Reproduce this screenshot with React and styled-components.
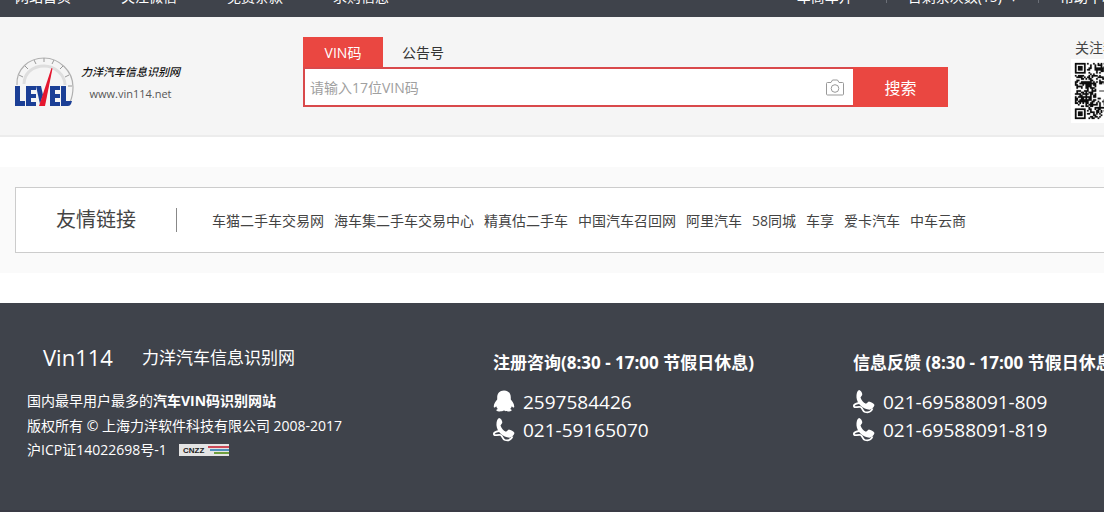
import React, { useState } from 'react';
import styled, { createGlobalStyle } from 'styled-components';

const GlobalStyle = createGlobalStyle`
  * {
    box-sizing: border-box;
  }
  body {
    margin: 0;
    background: #fff;
    color: #444;
    font: 14px/24px "Open Sans", "Noto Sans CJK SC", sans-serif;
    overflow-x: hidden;
  }
  a {
    color: inherit;
    text-decoration: none;
  }
  ul, h2, h3, p {
    margin: 0;
    padding: 0;
    list-style: none;
    font-weight: normal;
  }
`;

const Page = styled.div`
  min-width: 1200px;
`;

const TopBar = styled.nav`
  display: flex;
  justify-content: space-between;
  align-items: center;
  height: 40px;
  margin-top: -23px;
  padding: 0 84px 0 15px;
  background: #3f434b;
  color: #fff;
`;

const TopLinks = styled.div`
  display: flex;
  align-items: center;
  gap: ${({ $gap }) => $gap}px;
`;

const UserLink = styled.a`
  padding-right: 12px;
`;

const DropLink = styled.a`
  display: flex;
  gap: 8px;
`;

const TopDivider = styled.span`
  width: 1px;
  height: 12px;
  background: #6b6f77;
`;

const Header = styled.header`
  display: flex;
  align-items: flex-start;
  height: 120px;
  padding: 20px 15px 0;
  background: #f5f5f5;
  border-bottom: 2px solid #ececec;
`;

const Logo = styled.a`
  display: flex;
  gap: 7px;
  width: 288px;
  padding-top: 20px;
`;

const LogoText = styled.div`
  display: flex;
  flex-direction: column;
  padding-top: 4px;
  font-size: 11px;
  color: #555;
  text-align: center;
  line-height: 22px;

  strong {
    color: #111;
    font-weight: 500;
    font-style: italic;
  }
`;

const Search = styled.form`
  width: 645px;
`;

const Tabs = styled.div`
  display: flex;
  height: 30px;
`;

const Tab = styled.button`
  width: 80px;
  padding: 2px 0 0;
  border: 0;
  font: inherit;
  color: ${({ $active }) => ($active ? '#fff' : '#333')};
  background: ${({ $active }) => ($active ? '#ea4741' : 'transparent')};
`;

const SearchRow = styled.div`
  display: flex;
  height: 40px;
  background: #fff;
  border: 2px solid #d9494b;
  border-right: 0;
`;

const SearchInput = styled.input`
  flex: 1;
  min-width: 0;
  padding: 2px 5px 0;
  border: 0;
  outline: 0;
  background: none;
  font: inherit;

  &::placeholder {
    color: #a0a0a0;
    opacity: 1;
  }
`;

const CameraButton = styled.button`
  display: flex;
  align-items: center;
  padding: 0 9px;
  border: 0;
  background: none;
`;

const SearchButton = styled.button`
  width: 95px;
  margin: -2px 0;
  padding: 2px 0 0;
  border: 0;
  background: #ea4741;
  color: #fff;
  font: inherit;
  font-size: 16px;
`;

const Follow = styled.div`
  display: flex;
  flex-direction: column;
  margin-left: 123px;
  line-height: 22px;

  span {
    padding-left: 4px;
  }
`;

const Band = styled.section`
  margin: 30px 0;
  padding: 20px 15px;
  background: #fafafa;
`;

const LinksCard = styled.div`
  display: flex;
  align-items: center;
  height: 66px;
  padding-left: 40px;
  background: #fff;
  border: 1px solid #ccc;
`;

const LinksTitle = styled.h2`
  padding-right: 40px;
  margin-right: 35px;
  border-right: 1px solid #888;
  font-size: 20px;
  line-height: 24px;
`;

const LinksList = styled.ul`
  display: flex;
  gap: 10px;
  padding-top: 2px;
`;

const Footer = styled.footer`
  display: flex;
  height: 209px;
  padding-left: 27px;
  background: #3f434b;
  border-bottom: 2px solid #3a3b45;
  color: #fff;
`;

const About = styled.div`
  flex: none;
  width: 466px;
  padding-top: 40px;
  line-height: 25px;
`;

const Brand = styled.div`
  display: flex;
  align-items: center;
  gap: 29px;
  height: 28px;
  margin-bottom: 17px;
  padding-left: 16px;
  font-size: 17px;

  span:first-child {
    font-size: 22px;
  }
`;

const Record = styled.p`
  display: flex;
  align-items: center;
  gap: 12px;
  line-height: 24px;
`;

const Contact = styled.div`
  flex: none;
  width: 360px;
  padding-top: 48px;
`;

const ContactTitle = styled.h3`
  margin-bottom: 13px;
  font-size: 17px;
  font-weight: bold;
  white-space: nowrap;
`;

const ContactLine = styled.p`
  display: flex;
  align-items: center;
  gap: 8px;
  font-size: 19px;
  line-height: 28px;
`;

const topLinks = ['网站首页', '关注微信', '免费条款', '求购信息'];

const friendLinks = [
  '车猫二手车交易网', '海车集二手车交易中心', '精真估二手车', '中国汽车召回网',
  '阿里汽车', '58同城', '车享', '爱卡汽车', '中车云商',
];

const contacts = [
  {
    title: '注册咨询(8:30 - 17:00 节假日休息)',
    lines: [{ icon: 'qq', text: '2597584426' }, { icon: 'phone', text: '021-59165070' }],
  },
  {
    title: '信息反馈 (8:30 - 17:00 节假日休息)',
    lines: [{ icon: 'phone', text: '021-69588091-809' }, { icon: 'phone', text: '021-69588091-819' }],
  },
];

const LevelLogo = () => (
  <svg width="59" height="50" viewBox="0 0 59 50" fill="none">
    <path d="M2 28C1 12 14 1 29 1s29 13 29 29c0 6-1 11-3 15" stroke="#b0b0b0" strokeWidth="1.200" />
    <path d="M9 27C9 16 18 9 29 9s21 9 21 19" stroke="#dedede" strokeWidth="3" />
    <path d="M29 1v4M19 3l2 4M10 9l3 3M4 18l4 2M39 3l-2 4M48 9l-3 3M54 18l-4 2M57 29h-4" stroke="#999" />
    <g fill="#1b3f96">
      <path d="M0 29h5v15h5v5H0z" />
      <path d="M11 29h10v4h-5v4h5v4h-5v4h5v4H11z" />
      <path d="M21 29h5l2 9-3 9z" />
      <path d="M35 29h10v4h-5v4h5v4h-5v4h5v4H35z" />
      <path d="M46 29h5v15h6l-1 3q-1 2-3 2h-7z" />
    </g>
    <path d="M36.500 11l1 .5L30 49h-6z" fill="#e5172f" />
  </svg>
);

const Camera = () => (
  <svg width="18" height="17" viewBox="0 0 18 17" fill="none" stroke="#999">
    <path d="M1.500 3.500h3.500l1.500-2.500h5l1.500 2.500h3.500q1 0 1 1v10.500q0 1-1 1h-15q-1 0-1-1v-10.500q0-1 1-1z" />
    <circle cx="9" cy="9.500" r="3.800" />
  </svg>
);

const QQ = () => (
  <svg width="22" height="24" viewBox="0 0 22 24" fill="#fff">
    <path d="M11 .5C6.500.5 4.200 3.500 4.200 7.500v2C2 12 .5 15 .8 17c.3 1.300 1.500.3 2.400-.8.300 1.200.8 2 1.600 2.800C3 19.500 2.500 21.300 6 21.500c2 .1 4-.3 5-.9 1 .6 3 1 5 .9 3.500-.2 3-2 1.200-2.500.8-.8 1.300-1.600 1.600-2.800.9 1.100 2.100 2.100 2.400.8.300-2-1.200-5-3.400-7.500v-2c0-4-2.300-7-6.800-7z" />
  </svg>
);

const Phone = () => (
  <svg width="22" height="24" viewBox="0 0 22 24" fill="none">
    <path d="M6 0c2 .5 3.700 3 3.200 5L7.500 7.500c1 2.800 2.700 5 5.500 6.300l2.800-2.300c2 .2 5 1.700 5.700 3.500-1 3-3 4.300-5 4.700C10 19.500 4 13.500 3.500 7.500 3.300 4 4 1 6 0z" fill="#fff" />
    <path d="M6 13C2 13.500.2 15.300 1.200 16.800c1.200 1.300 3.800-.6 6.300.2 2.500 1.200 1.500 4 4.500 5 3 .8 6 0 7.500-3.500" stroke="#fff" strokeWidth="1.800" />
  </svg>
);

const Cnzz = () => (
  <svg width="50" height="12" viewBox="0 0 50 12">
    <path d="M0 0h50v12H0z" fill="#e4e4e4" />
    <text x="4" y="9" fontFamily="Liberation Sans" fontSize="8" fontWeight="bold" fill="#222">CNZZ</text>
    <path d="M29 2h21v2H29z" fill="#cc4a58" />
    <path d="M31 5h19v2H31z" fill="#4d8ebb" />
    <path d="M35 8h15v2H35z" fill="#6f9f3f" />
  </svg>
);

const QR_SIZE = 37;
const FINDERS = [[0, 0], [30, 0], [0, 30]];

const noise = (x, y) => {
  const n = Math.sin(x * 12.9898 + y * 78.233) * 43758.5453;
  return n - Math.floor(n);
};

// finder squares in three corners, a blank centre for the logo, noise elsewhere
const isDark = (x, y) => {
  for (const [fx, fy] of FINDERS) {
    const ring = Math.max(Math.abs(x - fx - 3), Math.abs(y - fy - 3));
    if (ring <= 4) return ring === 3 || ring <= 1;
  }
  if (x > 13 && x < 23 && y > 13 && y < 23) return false;
  return noise(x, y) < 0.52;
};

const QrCode = () => {
  let d = '';
  for (let y = 0; y < QR_SIZE; y++) {
    for (let x = 0; x < QR_SIZE; x++) {
      if (isDark(x, y)) d += `M${x} ${y}h1v1h-1z`;
    }
  }
  return (
    <svg width="64" height="64" viewBox="-2.600 -2.600 42.200 42.200">
      <path d="M-3-3h43v43H-3z" fill="#fff" />
      <path d={d} fill="#111" stroke="#111" strokeWidth="0.150" />
      <path d="M16 18h5v1h-5z" fill="#777" />
    </svg>
  );
};

const SearchBox = () => {
  const [tab, setTab] = useState('VIN码');

  return (
    <Search onSubmit={(e) => e.preventDefault()}>
      <Tabs>
        {['VIN码', '公告号'].map((name) => (
          <Tab key={name} type="button" $active={tab === name} onClick={() => setTab(name)}>
            {name}
          </Tab>
        ))}
      </Tabs>
      <SearchRow>
        <SearchInput aria-label={tab} placeholder="请输入17位VIN码" />
        <CameraButton type="button" aria-label="拍照"><Camera /></CameraButton>
        <SearchButton type="submit">搜索</SearchButton>
      </SearchRow>
    </Search>
  );
};

const App = () => (
  <Page>
    <GlobalStyle />
    <TopBar>
      <TopLinks $gap={50}>
        {topLinks.map((name) => <a key={name} href="#">{name}</a>)}
      </TopLinks>
      <TopLinks $gap={21}>
        <UserLink href="#">车商车开</UserLink>
        <TopDivider />
        <DropLink href="#">日剩余次数(15) <span>▾</span></DropLink>
        <TopDivider />
        <a href="#">帮助中心</a>
      </TopLinks>
    </TopBar>

    <Header>
      <Logo href="#">
        <LevelLogo />
        <LogoText>
          <strong>力洋汽车信息识别网</strong>
          <span>www.vin114.net</span>
        </LogoText>
      </Logo>
      <SearchBox />
      <Follow>
        <span>关注我们</span>
        <QrCode />
      </Follow>
    </Header>

    <Band>
      <LinksCard>
        <LinksTitle>友情链接</LinksTitle>
        <LinksList>
          {friendLinks.map((name) => <li key={name}><a href="#">{name}</a></li>)}
        </LinksList>
      </LinksCard>
    </Band>

    <Footer>
      <About>
        <Brand>
          <span>Vin114</span>
          <span>力洋汽车信息识别网</span>
        </Brand>
        <p>国内最早用户最多的<b>汽车VIN码识别网站</b></p>
        <p>版权所有 © 上海力洋软件科技有限公司 2008-2017</p>
        <Record>
          <a href="#">沪ICP证14022698号-1</a>
          <Cnzz />
        </Record>
      </About>
      {contacts.map(({ title, lines }) => (
        <Contact key={title}>
          <ContactTitle>{title}</ContactTitle>
          {lines.map(({ icon, text }) => (
            <ContactLine key={text}>
              {icon === 'qq' ? <QQ /> : <Phone />}
              {text}
            </ContactLine>
          ))}
        </Contact>
      ))}
    </Footer>
  </Page>
);

export default App;
